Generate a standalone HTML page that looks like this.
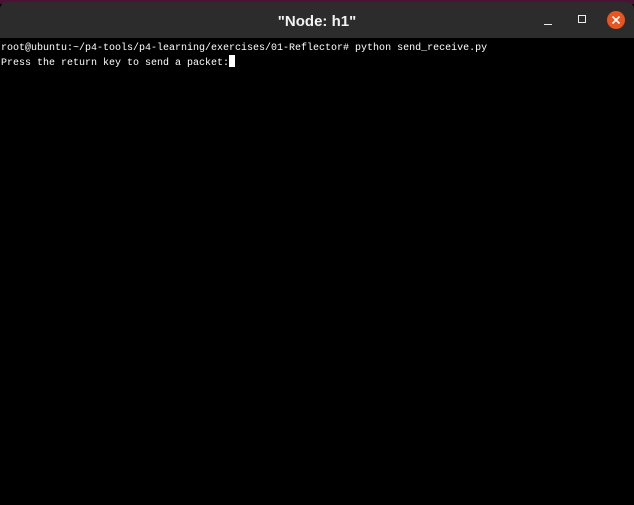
<!DOCTYPE html>
<html><head><meta charset="utf-8"><style>
html,body{margin:0;padding:0;width:634px;height:505px;overflow:hidden;background:#000}
.top{position:absolute;left:0;top:0;width:634px;height:4px;background:#4a1235}
.bar{position:absolute;left:0;top:2px;width:634px;height:36px;background:#2c2c2c;border-radius:7px 7px 0 0}
.title{position:absolute;left:0;width:634px;top:11px;text-align:center;color:#f2f2f2;font:bold 15px "Liberation Sans",sans-serif}
.term{position:absolute;left:1px;top:42px;color:#fff;font:10px/13px "Liberation Mono",monospace;white-space:pre}
.cur{display:inline-block;width:6px;height:12px;background:#fff;vertical-align:-2px}
</style></head><body>
<div class="top"></div>
<div class="bar">
<div class="title">"Node: h1"</div>
</div>
<div style="position:absolute;left:544px;top:24px;width:8px;height:1px;background:#eee"></div>
<div style="position:absolute;left:578px;top:15px;width:6px;height:6px;border:1.5px solid #eee"></div>
<div style="position:absolute;left:607px;top:11px;width:18px;height:18px;border-radius:50%;background:#e95420"></div>
<svg style="position:absolute;left:607px;top:11px" width="18" height="18"><path d="M5.5 5.5L12.5 12.5M12.5 5.5L5.5 12.5" stroke="#fff" stroke-width="1.6"/></svg>
<div class="term">root@ubuntu:~/p4-tools/p4-learning/exercises/01-Reflector# python send_receive.py
Press the return key to send a packet:<span class="cur"></span></div>
</body></html>
